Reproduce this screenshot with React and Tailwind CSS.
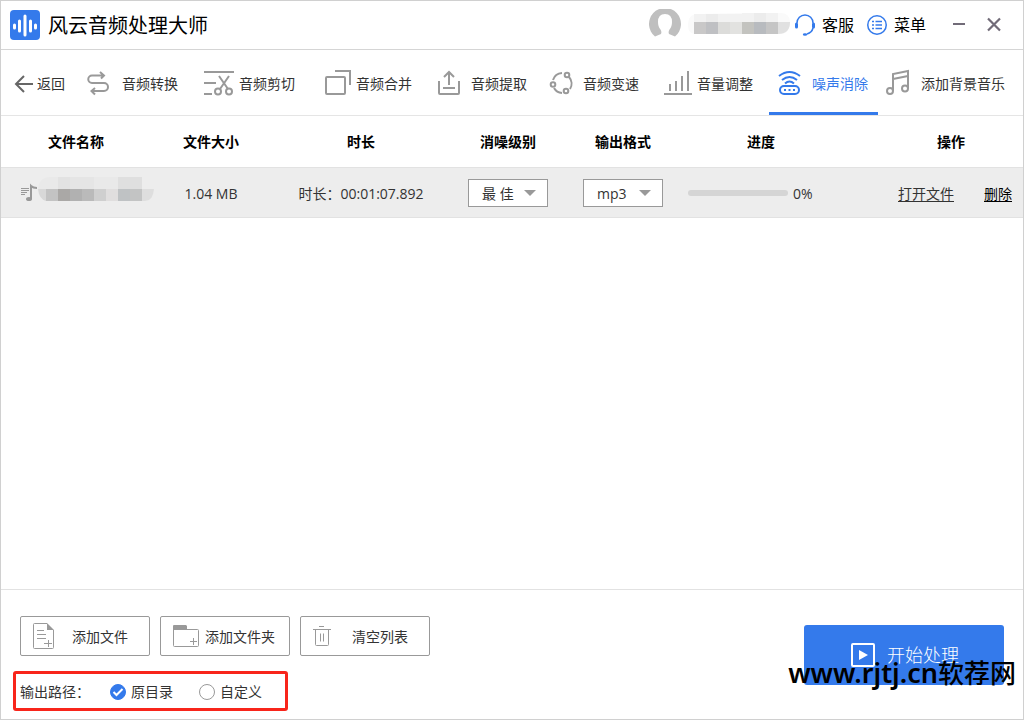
import { useState } from "react";
import clsx from "clsx";

const tabs = [
  { id: "convert", label: "音频转换", Icon: ConvertIcon },
  { id: "cut", label: "音频剪切", Icon: CutIcon },
  { id: "merge", label: "音频合并", Icon: MergeIcon },
  { id: "extract", label: "音频提取", Icon: ExtractIcon },
  { id: "speed", label: "音频变速", Icon: SpeedIcon },
  { id: "volume", label: "音量调整", Icon: VolumeIcon },
  { id: "denoise", label: "噪声消除", Icon: DenoiseIcon },
  { id: "bgm", label: "添加背景音乐", Icon: MusicIcon },
];

function TabSvg({ children }) {
  return (
    <svg className="h-8 w-8 shrink-0" viewBox="0 0 32 32" fill="none" stroke="currentColor" strokeWidth="2">
      {children}
    </svg>
  );
}

function ConvertIcon() {
  return (
    <TabSvg>
      <path d="M15 4l4 3.500-3 3M19 7.500H7a3.750 3.750 0 0 0 0 7.500h12a4 4 0 0 1 0 8H7M10 20l-3.500 3L10 26.500" />
    </TabSvg>
  );
}

function CutIcon() {
  return (
    <TabSvg>
      <path d="M2 4h30M2 15h12M2 26h8M17 8l9 13M27 8l-9 13" />
      <circle cx="16" cy="23.500" r="3" />
      <circle cx="27" cy="23.500" r="3" />
    </TabSvg>
  );
}

function MergeIcon() {
  return (
    <TabSvg>
      <rect x="7" y="9" width="19" height="17" rx="1" />
      <path d="M16 3h15v14" />
    </TabSvg>
  );
}

function ExtractIcon() {
  return (
    <TabSvg>
      <path d="M5 13v12q0 1 1 1h18q1 0 1-1V13M9 20h12M15 17V5M10 9l5-5 5 5" />
    </TabSvg>
  );
}

function SpeedIcon() {
  return (
    <TabSvg>
      <path d="M7 12a10 10 0 0 1 9-7M23 9a10 10 0 0 1 1 12M16 25a10 10 0 0 1-8-5" />
      <circle cx="21" cy="7" r="2.300" />
      <circle cx="7" cy="16.500" r="2.300" />
      <circle cx="20" cy="23" r="2.300" />
    </TabSvg>
  );
}

function VolumeIcon() {
  return (
    <TabSvg>
      <path d="M4 26h28M10 23v-7M16 23V13M22 23V8M28 23V3" />
    </TabSvg>
  );
}

function DenoiseIcon() {
  return (
    <TabSvg>
      <rect x="5" y="18" width="19" height="8" rx="4" />
      <path d="M4 8q10.500-8 21 0M7 12q7.500-6 15 0M10 15.500q4.500-4 9 0" />
      <path d="M9 22h2M13.500 22h2M18 22h2" />
    </TabSvg>
  );
}

function MusicIcon() {
  return (
    <TabSvg>
      <circle cx="6" cy="23" r="3" />
      <circle cx="21" cy="20.500" r="3" />
      <path d="M9 23V6l15-3v17M9 11l15-3" />
    </TabSvg>
  );
}

function HeaderBar() {
  return (
    <header className="flex h-[49px] shrink-0 items-center border-b border-[#d5d5d5] pl-[9px] pr-[21px]">
      <svg className="h-[30px] w-[30px] shrink-0" viewBox="0 0 30 30">
        <rect width="30" height="30" rx="4" fill="#347aeb" />
        <path d="M4.500 15v3M9.500 11v10M15 6v19M20.500 11v10M25.500 15v3" stroke="#fff" strokeWidth="3" strokeLinecap="round" />
      </svg>
      <h1 className="ml-2 whitespace-nowrap pt-px text-xl text-black">风云音频处理大师</h1>
      <div className="ml-auto flex items-center text-base text-black">
        <svg className="h-8 w-8" viewBox="0 0 32 32">
          <path
            d="M6 27.500A16 16 0 1 1 26 27.500L20 25Q19 23 20.500 20.500Q23 18 23 13Q23 5 16 5Q9 5 9 13Q9 18 11.500 20.500Q13 23 12 25Z"
            fill="#bfbfbf"
          />
        </svg>
        <svg className="ml-[7px] h-6 w-[102px]" viewBox="0 0 102 24">
          <path d="M0 12Q0 1 10 1L54 0H92Q102 0 102 9Q102 21 92 21H6Q0 20 0 12Z" fill="#fafafa" />
          <path d="M6 1h48v8H6zM54 0h36v9H54z" fill="#f2f2f2" />
          <path d="M18 1h12v8H18zM66 0h12v9H66z" fill="#ececec" />
          <rect x="6" y="9" width="12" height="12" fill="#c9c8c8" />
          <rect x="18" y="9" width="12" height="12" fill="#bfc0c3" />
          <rect x="30" y="9" width="12" height="12" fill="#dcdcda" />
          <rect x="42" y="9" width="12" height="12" fill="#e2e2e0" />
          <rect x="54" y="9" width="12" height="12" fill="#c3c3bf" />
          <rect x="66" y="9" width="12" height="12" fill="#b8bbbf" />
          <rect x="78" y="9" width="12" height="12" fill="#c5c5c5" />
          <path d="M90 9h12Q102 21 90 21Z" fill="#e1e1e1" />
        </svg>
        <button type="button" className="ml-1 flex items-center gap-1.5">
          <svg className="h-[22px] w-[22px]" viewBox="0 0 22 22" fill="none" stroke="#347aeb" strokeWidth="1.500">
            <path d="M3 9a8 8 0 0 1 16 0M19 14q-1 4.500-6 6" />
            <path d="M2.500 10v3M19.500 10v3" strokeWidth="3" strokeLinecap="round" />
            <ellipse cx="11" cy="20.500" rx="2.200" ry="1.300" fill="#347aeb" stroke="none" />
          </svg>
          客服
        </button>
        <button type="button" className="ml-3 flex items-center gap-1.5">
          <svg className="h-[22px] w-[22px]" viewBox="0 0 22 22" fill="none" stroke="#347aeb" strokeWidth="1.500">
            <circle cx="11" cy="11" r="9.250" />
            <path d="M6 7.500h2M6 11h2M6 14.500h2M9.500 7.500H16M9.500 11H16M9.500 14.500H16" />
          </svg>
          菜单
        </button>
        <button type="button" aria-label="最小化" className="ml-[26px]">
          <svg className="h-4 w-4" viewBox="0 0 16 16">
            <path d="M1 7h12" stroke="#716b78" strokeWidth="2" />
          </svg>
        </button>
        <button type="button" aria-label="关闭" className="ml-[18px]">
          <svg className="h-4 w-4" viewBox="0 0 16 16">
            <path d="M2 1.500l12 12M14 1.500l-12 12" stroke="#716b78" strokeWidth="2.200" />
          </svg>
        </button>
      </div>
    </header>
  );
}

function Toolbar({ active, onChange }) {
  return (
    <nav className="grid h-[66px] shrink-0 grid-cols-[78fr_117fr_117fr_115fr_112fr_114fr_115fr_109fr_145fr] border-b border-[#e5e5e5]">
      <button type="button" className="flex items-center gap-1 whitespace-nowrap pl-[13px] pt-[3px]">
        <svg className="h-5 w-[19px] shrink-0" viewBox="0 0 19 20" fill="none" stroke="#666" strokeWidth="2">
          <path d="M19 10H1.500M10 2l-8 8 8 8" />
        </svg>
        返回
      </button>
      {tabs.map(({ id, label, Icon }) => (
        <button
          key={id}
          type="button"
          onClick={() => onChange(id)}
          className={clsx(
            "flex items-center gap-[5px] whitespace-nowrap border-b-3 pl-1.5 pt-[6px]",
            id === active ? "border-[#347aeb] text-[#347aeb]" : "border-transparent"
          )}
        >
          <span className={id === active ? "text-[#347aeb]" : "text-[#999]"}>
            <Icon />
          </span>
          {label}
        </button>
      ))}
    </nav>
  );
}

function SelectBox({ label, value, options }) {
  return (
    <span className="relative inline-block align-middle">
      <select
        aria-label={label}
        defaultValue={value}
        className="block h-7 w-20 appearance-none border border-[#999] bg-white pl-[13px] pt-px text-sm text-[#333]"
      >
        {options.map((option) => (
          <option key={option}>{option}</option>
        ))}
      </select>
      <svg className="pointer-events-none absolute right-3 top-[11px] h-1.5 w-3" viewBox="0 0 12 6">
        <path d="M0 0h12L6 6z" fill="#999" />
      </svg>
    </span>
  );
}

function FileName() {
  return (
    <div className="flex items-center pb-1 pl-5">
      <svg className="h-[26px] w-[134px] shrink-0" viewBox="0 0 134 26">
        <path d="M0 11.500h8M0 13.500h8M0 15.500h6M0 17.500h4" stroke="#999" />
        <path d="M10 22V9q2 2 6 2" stroke="#999" strokeWidth="2" fill="none" />
        <ellipse cx="8" cy="22" rx="3" ry="2" fill="#999" />
        <path d="M30 0h91v12H17Q18 0 30 0Z" fill="#e9e9e9" />
        <path d="M37 0h12v12H37z" fill="#e2e2e2" />
        <path d="M49 0h24v12H49z" fill="#e5e5e5" />
        <path d="M97 0h24v12H97z" fill="#dfdfdf" />
        <path d="M17 12h8v12Q18 22 17 12Z" fill="#d8d8d8" />
        <rect x="25" y="12" width="12" height="12" fill="#c3c3c3" />
        <rect x="37" y="12" width="12" height="12" fill="#aaa8a6" />
        <rect x="49" y="12" width="12" height="12" fill="#b1b1b1" />
        <rect x="61" y="12" width="12" height="12" fill="#bababa" />
        <rect x="73" y="12" width="12" height="12" fill="#cfcfcf" />
        <rect x="85" y="12" width="12" height="12" fill="#e0dede" />
        <rect x="97" y="12" width="12" height="12" fill="#bfc2c4" />
        <rect x="109" y="12" width="12" height="12" fill="#c3c4c4" />
        <path d="M121 12h12Q132 24 124 24H121Z" fill="#dedede" />
      </svg>
    </div>
  );
}

function FileTable() {
  return (
    <table className="w-full table-fixed border-collapse text-center">
      <colgroup>
        <col className="w-[150px]" />
        <col className="w-[120px]" />
        <col className="w-[180px]" />
        <col className="w-[114px]" />
        <col className="w-[116px]" />
        <col className="w-[160px]" />
        <col />
      </colgroup>
      <thead>
        <tr className="h-[51px] border-b border-[#e2e2e2] text-black *:pt-0.5">
          <th>文件名称</th>
          <th>文件大小</th>
          <th>时长</th>
          <th>消噪级别</th>
          <th>输出格式</th>
          <th>进度</th>
          <th className="pl-[38px]">操作</th>
        </tr>
      </thead>
      <tbody>
        <tr className="h-[50px] border-b border-[#e2e2e2] bg-[#ededed]">
          <td>
            <FileName />
          </td>
          <td className="pt-1">1.04 MB</td>
          <td className="pt-1">时长：00:01:07.892</td>
          <td className="pt-0.5">
            <SelectBox label="消噪级别" value="最 佳" options={["最 佳", "中 等", "一 般"]} />
          </td>
          <td className="pt-0.5">
            <SelectBox label="输出格式" value="mp3" options={["mp3", "wav", "flac"]} />
          </td>
          <td className="pt-0.5">
            <div className="flex items-center gap-[5px] pl-[7px]">
              <div
                role="progressbar"
                aria-label="进度"
                aria-valuenow={0}
                className="h-1.5 w-[100px] rounded-sm bg-[#d5d5d5]"
              />
              <span className="pt-0.5">0%</span>
            </div>
          </td>
          <td className="pt-1">
            <div className="flex justify-end gap-[30px] pr-[11px]">
              <a href="#open" className="underline underline-offset-2">打开文件</a>
              <a href="#delete" className="text-black underline underline-offset-2">删除</a>
            </div>
          </td>
        </tr>
      </tbody>
    </table>
  );
}

function ActionButton({ icon, className, children }) {
  return (
    <button
      type="button"
      className={clsx("flex h-10 w-[130px] items-center whitespace-nowrap rounded-xs border border-[#999] pl-3", className)}
    >
      {icon}
      <span className="pt-0.5">{children}</span>
    </button>
  );
}

function OutputOption({ id, label, checked, onChange }) {
  return (
    <label htmlFor={id} className="flex items-center gap-[5px]">
      <span className="relative block h-4 w-4">
        <input
          id={id}
          type="radio"
          name="output"
          checked={checked}
          onChange={onChange}
          className="block h-4 w-4 appearance-none rounded-full border border-[#999] checked:border-[#347aeb] checked:bg-[#347aeb]"
        />
        {checked && (
          <svg className="pointer-events-none absolute inset-0 h-4 w-4" viewBox="0 0 16 16" fill="none">
            <path d="M3.500 8l3 3L12.500 5" stroke="#fff" strokeWidth="2" />
          </svg>
        )}
      </span>
      {label}
    </label>
  );
}

function Footer() {
  const [output, setOutput] = useState("source");

  return (
    <footer className="flex shrink-0 items-start justify-between border-t border-[#e2e2e2] pb-2 pl-3 pr-[19px] pt-[26px]">
      <div className="flex flex-col gap-[15px]">
        <div className="flex gap-2.5 pl-[7px]">
          <ActionButton
            className="gap-[18px]"
            icon={
              <svg className="h-[26px] w-[21px]" viewBox="0 0 21 26" fill="none" stroke="#999">
                <path d="M14 .5H1.500q-1 0-1 1v23q0 1 1 1h18q1 0 1-1V7" />
                <path d="M14 0v7h7z" fill="#999" stroke="none" />
                <path d="M4 7.500h7M4 11.500h9M4 15.500h9M11 20.500h8M15.500 17v7" />
              </svg>
            }
          >
            添加文件
          </ActionButton>
          <ActionButton
            className="gap-[6px]"
            icon={
              <svg className="h-[22px] w-[26px]" viewBox="0 0 26 22" fill="none" stroke="#999">
                <path d="M.5 3v17.500q0 1 1 1h23q1 0 1-1V5.500q0-1-1-1H14" />
                <path d="M0 1q0-1 1-1h12l1 1v4H0z" fill="#999" stroke="none" />
                <path d="M17 16.500h7M20.500 13v7" />
              </svg>
            }
          >
            添加文件夹
          </ActionButton>
          <ActionButton
            className="gap-[21px]"
            icon={
              <svg className="h-5 w-[18px]" viewBox="0 0 18 20" fill="none" stroke="#999">
                <path d="M6 .5h5M0 3.500h18M2.500 4v14.500q0 1 1 1h11q1 0 1-1V4M7.500 7.500v8M10.500 7.500v8" />
              </svg>
            }
          >
            清空列表
          </ActionButton>
        </div>
        <div
          role="radiogroup"
          aria-labelledby="output-label"
          className="flex h-10 w-[275px] items-center rounded-[3px] border-3 border-[#f8251b] pl-1 pt-px"
        >
          <span id="output-label" className="w-[90px]">输出路径：</span>
          <div className="flex gap-[26px]">
            <OutputOption id="source" label="原目录" checked={output === "source"} onChange={() => setOutput("source")} />
            <OutputOption id="custom" label="自定义" checked={output === "custom"} onChange={() => setOutput("custom")} />
          </div>
        </div>
      </div>
      <div className="relative mt-[9px]">
        <button
          type="button"
          className="flex h-[60px] w-[200px] items-center justify-center gap-3 rounded-[3px] bg-[#347aeb] pl-0.5 text-lg font-light text-white"
        >
          <svg className="h-6 w-6" viewBox="0 0 24 24">
            <rect x="1" y="1" width="22" height="22" rx="1" fill="none" stroke="#fff" strokeWidth="2" />
            <path d="M8 7l9 5-9 5z" fill="#fff" />
          </svg>
          开始处理
        </button>
        <span className="pointer-events-none absolute -right-3 top-8 whitespace-nowrap font-['Noto_Sans','Noto_Sans_CJK_SC',sans-serif] text-[26px] font-medium leading-8 text-black">
          <span className="text-[27px] font-semibold">www.rjtj.cn</span>软荐网
        </span>
      </div>
    </footer>
  );
}

export default function App() {
  const [active, setActive] = useState("denoise");

  return (
    <div className="flex min-h-screen flex-col border border-[#d0d0d0] bg-white font-['Open_Sans','Noto_Sans_CJK_SC',sans-serif] text-sm text-[#333]">
      <HeaderBar />
      <Toolbar active={active} onChange={setActive} />
      <main className="flex-1">
        <FileTable />
      </main>
      <Footer />
    </div>
  );
}
